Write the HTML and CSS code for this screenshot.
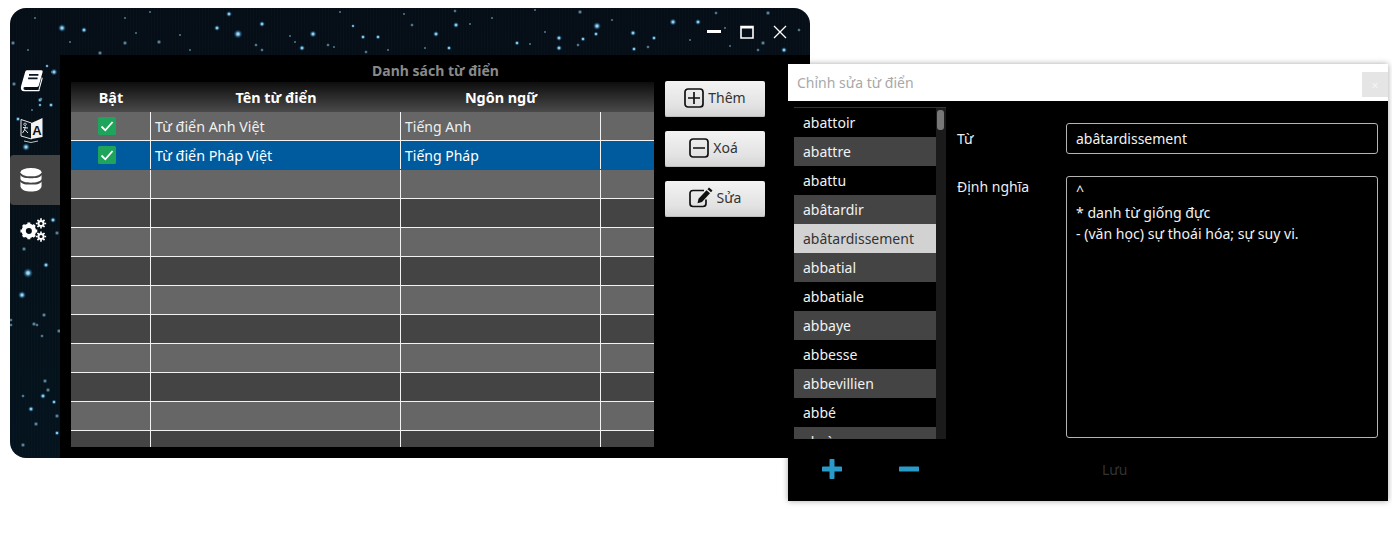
FILE: index.html
```html
<!DOCTYPE html>
<html lang="vi">
<head>
<meta charset="utf-8">
<title>Danh sách từ điển</title>
<link rel="stylesheet" href="styles.css">
</head>
<body>
<section class="win-main">
  <svg class="stars" width="800" height="450" viewBox="10 8 800 450" aria-hidden="true">
    <defs>
      <radialGradient id="st"><stop offset="0" stop-color="#e6f7ff"/><stop offset=".3" stop-color="#9ad4f2"/><stop offset=".6" stop-color="#2f7fae" stop-opacity=".7"/><stop offset="1" stop-color="#1a5a82" stop-opacity="0"/></radialGradient>
      <radialGradient id="dm"><stop offset="0" stop-color="#a8c8d8"/><stop offset=".5" stop-color="#5d8aa3" stop-opacity=".7"/><stop offset="1" stop-color="#2a5a75" stop-opacity="0"/></radialGradient>
    </defs>
    <g fill="url(#st)">
      <circle cx="62" cy="28" r="4"/><circle cx="84" cy="30" r="3"/><circle cx="217" cy="28" r="3"/><circle cx="229" cy="14" r="3"/><circle cx="238" cy="34" r="4.500"/><circle cx="262" cy="24" r="3"/><circle cx="313" cy="34" r="3.500"/><circle cx="302" cy="48" r="3"/><circle cx="363" cy="37" r="2.500"/><circle cx="378" cy="37" r="2.500"/><circle cx="353" cy="26" r="2"/><circle cx="54" cy="72" r="3.500"/><circle cx="26" cy="147" r="4"/><circle cx="456" cy="25" r="3"/><circle cx="436" cy="34" r="3"/><circle cx="449" cy="48" r="2.500"/><circle cx="517" cy="43" r="2.500"/><circle cx="559" cy="38" r="3"/><circle cx="559" cy="48" r="3"/><circle cx="583" cy="39" r="2.500"/><circle cx="597" cy="26" r="4"/><circle cx="596" cy="34" r="2.500"/><circle cx="633" cy="33" r="3"/><circle cx="634" cy="49" r="2.500"/><circle cx="654" cy="38" r="2.500"/><circle cx="673" cy="22" r="3.500"/><circle cx="698" cy="22" r="3"/><circle cx="784" cy="50" r="3"/><circle cx="28" cy="273" r="5"/><circle cx="22" cy="295" r="4"/><circle cx="53" cy="220" r="3"/><circle cx="46" cy="265" r="3"/><circle cx="31" cy="409" r="3"/><circle cx="43" cy="396" r="3"/><circle cx="47" cy="66" r="2"/><circle cx="40" cy="100" r="2.500"/><circle cx="51" cy="105" r="2.500"/><circle cx="40" cy="105" r="2"/><circle cx="18" cy="119" r="2.500"/><circle cx="54" cy="402" r="2.500"/><circle cx="57" cy="433" r="2.500"/></g>
    <g fill="url(#dm)">
      <circle cx="13" cy="43" r="2.500"/><circle cx="125" cy="43" r="2.500"/><circle cx="159" cy="42" r="2.500"/><circle cx="100" cy="53" r="2.500"/><circle cx="14" cy="84" r="2.500"/><circle cx="41" cy="99" r="2"/><circle cx="52" cy="72" r="1.500"/><circle cx="32" cy="110" r="1.500"/><circle cx="455" cy="11" r="2"/><circle cx="580" cy="12" r="2.500"/><circle cx="716" cy="13" r="2"/><circle cx="768" cy="13" r="2.500"/><circle cx="763" cy="43" r="2.500"/><circle cx="799" cy="30" r="2"/><circle cx="57" cy="233" r="2.500"/><circle cx="24" cy="249" r="2.500"/><circle cx="44" cy="315" r="2.500"/><circle cx="34" cy="324" r="2.500"/><circle cx="37" cy="325" r="2"/><circle cx="11" cy="320" r="2"/><circle cx="11" cy="325" r="2"/><circle cx="59" cy="331" r="2.500"/><circle cx="42" cy="336" r="2"/><circle cx="45" cy="381" r="2.500"/><circle cx="48" cy="390" r="2.500"/><circle cx="23" cy="396" r="2"/><circle cx="57" cy="416" r="2.500"/><circle cx="36" cy="424" r="2.500"/><circle cx="23" cy="445" r="2.500"/>
      <circle cx="125" cy="18" r="1.500"/><circle cx="180" cy="35" r="1.500"/><circle cx="136" cy="33" r="1.500"/><circle cx="492" cy="18" r="1.500"/><circle cx="535" cy="10" r="1.500"/><circle cx="404" cy="14" r="1.500"/><circle cx="412" cy="25" r="2"/><circle cx="290" cy="36" r="1.500"/><circle cx="295" cy="42" r="1.500"/><circle cx="256" cy="45" r="2"/><circle cx="262" cy="50" r="2"/><circle cx="328" cy="45" r="2"/><circle cx="334" cy="47" r="1.500"/><circle cx="366" cy="52" r="2"/><circle cx="388" cy="50" r="1.500"/><circle cx="340" cy="12" r="1.500"/><circle cx="425" cy="48" r="1.500"/><circle cx="470" cy="24" r="1.500"/><circle cx="530" cy="44" r="1.500"/><circle cx="545" cy="32" r="1.500"/><circle cx="578" cy="45" r="2"/><circle cx="612" cy="20" r="1.500"/><circle cx="648" cy="47" r="2"/><circle cx="730" cy="46" r="1.500"/><circle cx="758" cy="50" r="2"/><circle cx="690" cy="40" r="1.500"/><circle cx="725" cy="28" r="1.500"/><circle cx="150" cy="12" r="1.500"/><circle cx="190" cy="50" r="1.500"/><circle cx="70" cy="42" r="1.500"/><circle cx="35" cy="18" r="1.500"/><circle cx="28" cy="50" r="1.500"/></g>
  </svg>

  <div class="titlebar">
    <svg class="wc" width="14" height="14" viewBox="0 0 14 14"><rect x="0" y="5" width="14" height="3" fill="#fff"/></svg>
    <svg class="wc" width="14" height="14" viewBox="0 0 14 14"><path d="M1 1.500h12v11.500H1z" fill="none" stroke="#fff" stroke-width="1.600"/><rect x="1" y="1" width="12" height="2.500" fill="#fff"/></svg>
    <svg class="wc" width="14" height="14" viewBox="0 0 14 14"><path d="M1 1l12 12M13 1L1 13" fill="none" stroke="#fff" stroke-width="1.300"/></svg>
  </div>

  <div class="main-body">
    <nav class="side">
      <div class="nav-item">
        <svg width="24" height="23" viewBox="0 0 28 26"><path d="M8 1h17q2 0 1.400 2l-4.500 16q-.6 1.600-2.400 1.600H6q-2 0-2 1.700T6 24h15.500l4-15 1 1.500-3.800 13.700Q24 25.500 22 25.500H4.500Q1 25.500 1 21.500q0-1 .4-2.500L6 3Q6.500 1 8 1z" fill="#fff"/><path d="M10.500 6.500h11M9.500 10.500h11" stroke="#0a1620" stroke-width="2"/></svg>
      </div>
      <div class="nav-item">
        <svg width="24" height="28" viewBox="0 0 24 28"><path d="M1 3.500l10.500 3.500v16L1 20z" fill="#0a1620" stroke="#e8e8e8" stroke-width="1"/><path d="M11.500 7L22.500 2v19l-11 2z" fill="#f2f2f2"/><text x="17" y="18.500" class="ic-a">A</text><path d="M5 9.500a1.200 1.200 0 1 1 .1 0M5.500 10.500L4.500 14 2.500 17M4.800 13.500L8 17M3 11.500l5 .5" fill="none" stroke="#e8e8e8" stroke-width="1"/><path d="M4 25q7 3 14 0" fill="none" stroke="#b8c4c8" stroke-width="1"/></svg>
      </div>
      <div class="nav-item active">
        <svg width="22" height="24" viewBox="0 0 24 26"><ellipse cx="12" cy="4.500" rx="11.500" ry="4.500" fill="#fff"/><path d="M.5 7.500C2 10.500 7 11 12 11s10-.5 11.500-3.500V12c-1 3-6 4-11.500 4S1.500 15 .5 12zM.5 14.500c1.500 3 6.500 3.500 11.500 3.500s10-.5 11.500-3.500V20c-1 4-6 5.500-11.500 5.500S1.500 24 .5 20z" fill="#fff"/></svg>
      </div>
      <div class="nav-item">
        <svg width="28" height="26" viewBox="0 0 30 26"><g fill="none" stroke="#fff"><circle cx="9.500" cy="14" r="5.500" stroke-width="4.500"/><path d="M9.500 5v3M9.500 20v3M.5 14h3M15.500 14h3M3.200 7.700l2.100 2.100M13.700 18.200l2.100 2.100M3.200 20.300l2.100-2.100M13.700 9.800l2.100-2.100" stroke-width="3.200"/><circle cx="22.500" cy="6" r="2.700" stroke-width="2"/><path d="M22.500 .5v2M22.500 9.500v2M17 6h2M26 6h2M18.700 2.200l1.300 1.300M25 8.500l1.300 1.300M18.700 9.800L20 8.500M25 3.500l1.300-1.300" stroke-width="1.800"/><circle cx="22.500" cy="20" r="2.700" stroke-width="2"/><path d="M22.500 14.500v2M22.500 23.500v2M17 20h2M26 20h2M18.700 16.200l1.300 1.300M25 22.500l1.300 1.300M18.700 23.800l1.300-1.300M25 17.500l1.300-1.300" stroke-width="1.800"/></g></svg>
      </div>
    </nav>

    <div class="panel">
      <h1 class="panel-title">Danh sách từ điển</h1>
      <div class="panel-row">
        <div class="grid">
          <div class="grid-head">
            <div class="c c1">Bật</div><div class="c c2">Tên từ điển</div><div class="c c3">Ngôn ngữ</div><div class="c c4"></div>
          </div>
          <div class="row odd">
            <div class="c c1"><svg class="check" width="18" height="18" viewBox="0 0 18 18"><rect width="18" height="18" rx="1.500" fill="#1fa45c"/><path d="M3.500 9.500l3.800 3.800 7.300-8.300" fill="none" stroke="#fff" stroke-width="1.800"/></svg></div><div class="c c2">Từ điển Anh Việt</div><div class="c c3">Tiếng Anh</div><div class="c c4"></div>
          </div>
          <div class="row sel">
            <div class="c c1"><svg class="check" width="18" height="18" viewBox="0 0 18 18"><rect width="18" height="18" rx="1.500" fill="#1fa45c"/><path d="M3.500 9.500l3.800 3.800 7.300-8.300" fill="none" stroke="#fff" stroke-width="1.800"/></svg></div><div class="c c2">Từ điển Pháp Việt</div><div class="c c3">Tiếng Pháp</div><div class="c c4"></div>
          </div>
          <div class="row odd"><div class="c c1"></div><div class="c c2"></div><div class="c c3"></div><div class="c c4"></div></div>
          <div class="row even"><div class="c c1"></div><div class="c c2"></div><div class="c c3"></div><div class="c c4"></div></div>
          <div class="row odd"><div class="c c1"></div><div class="c c2"></div><div class="c c3"></div><div class="c c4"></div></div>
          <div class="row even"><div class="c c1"></div><div class="c c2"></div><div class="c c3"></div><div class="c c4"></div></div>
          <div class="row odd"><div class="c c1"></div><div class="c c2"></div><div class="c c3"></div><div class="c c4"></div></div>
          <div class="row even"><div class="c c1"></div><div class="c c2"></div><div class="c c3"></div><div class="c c4"></div></div>
          <div class="row odd"><div class="c c1"></div><div class="c c2"></div><div class="c c3"></div><div class="c c4"></div></div>
          <div class="row even"><div class="c c1"></div><div class="c c2"></div><div class="c c3"></div><div class="c c4"></div></div>
          <div class="row odd"><div class="c c1"></div><div class="c c2"></div><div class="c c3"></div><div class="c c4"></div></div>
          <div class="row even"><div class="c c1"></div><div class="c c2"></div><div class="c c3"></div><div class="c c4"></div></div>
        </div>
        <div class="actions">
          <button class="btn"><svg width="20" height="20" viewBox="0 0 20 20"><rect x="1" y="1" width="18" height="18" rx="3" fill="none" stroke="#111" stroke-width="1.700"/><path d="M10 4v12M4 10h12" stroke="#111" stroke-width="1.700"/></svg><span>Thêm</span></button>
          <button class="btn btn-x"><svg width="20" height="20" viewBox="0 0 20 20"><rect x="1" y="1" width="18" height="18" rx="3" fill="none" stroke="#111" stroke-width="1.700"/><path d="M4 10h12" stroke="#111" stroke-width="1.700"/></svg><span>Xoá</span></button>
          <button class="btn"><svg width="24" height="21" viewBox="0 0 24 21"><path d="M15 3.500H4Q1 3.500 1 6.500v10q0 3 3 3h10q3 0 3-3v-4" fill="none" stroke="#111" stroke-width="1.700"/><path d="M20 .5l3.500 3-1.500 1.800-3.500-3zM17.500 3.300l3.500 3-8 8.700-4.500 1.200 1-4.500z" fill="#111"/></svg><span>Sửa</span></button>
        </div>
      </div>
    </div>
  </div>
</section>

<section class="win-edit">
  <header class="edit-title">
    <span>Chỉnh sửa từ điển</span>
    <div class="edit-close">×</div>
  </header>
  <div class="edit-body">
    <div class="list-wrap">
      <ul class="list">
        <li>abattoir</li><li>abattre</li><li>abattu</li><li>abâtardir</li><li class="cur">abâtardissement</li><li>abbatial</li><li>abbatiale</li><li>abbaye</li><li>abbesse</li><li>abbevillien</li><li>abbé</li><li>abcès</li>
      </ul>
      <div class="scroll"><div class="thumb"></div></div>
    </div>
    <div class="form">
      <div class="f-row">
        <label class="f-label">Từ</label>
        <div class="f-input">abâtardissement</div>
      </div>
      <div class="f-row f-grow">
        <label class="f-label f-label2">Định nghĩa</label>
        <div class="f-area">^<br>* danh từ giống đực<br>- (văn học) sự thoái hóa; sự suy vi.</div>
      </div>
    </div>
  </div>
  <footer class="edit-foot">
    <svg class="tool" width="20" height="20" viewBox="0 0 20 20"><path d="M10 1.500v17M1.500 10h17" stroke="#2a9bc8" stroke-width="5" stroke-linecap="round"/></svg>
    <svg class="tool tool2" width="20" height="20" viewBox="0 0 20 20"><path d="M1.500 10h17" stroke="#2a9bc8" stroke-width="5" stroke-linecap="round"/></svg>
    <span class="save">Lưu</span>
  </footer>
</section>
</body>
</html>
```

FILE: styles.css
```css
* { box-sizing: border-box; }
html, body { margin: 0; padding: 0; }
body {
  width: 1392px;
  height: 535px;
  position: relative;
  overflow: hidden;
  background: #fff;
  font-family: "Noto Sans", "Open Sans", sans-serif;
  font-size: 14px;
}

.win-main {
  position: absolute;
  left: 10px;
  top: 8px;
  width: 800px;
  height: 450px;
  border-radius: 16px;
  overflow: hidden;
  background:
    repeating-linear-gradient(90deg, rgba(255,255,255,.012) 0 1px, transparent 1px 3px),
    linear-gradient(180deg, #060f18 0%, #06121b 60%, #04141e 100%);
  display: flex;
  flex-direction: column;
}
.stars { position: absolute; left: 0; top: 0; opacity: .9; }

.titlebar {
  position: relative;
  height: 47px;
  flex: none;
  display: flex;
  justify-content: flex-end;
  gap: 19px;
  padding: 17px 23px 0 0;
}
.wc { display: block; }

.main-body { position: relative; flex: 1; display: flex; min-height: 0; }

.side {
  width: 50px;
  flex: none;
  display: flex;
  flex-direction: column;
}
.nav-item {
  height: 50px;
  display: flex;
  align-items: center;
  padding-left: 10px;
}
.nav-item.active { background: #444; border-radius: 4px 0 0 4px; }
.ic-a { font: 700 13px "Liberation Sans", sans-serif; fill: #111; text-anchor: middle; }

.panel {
  flex: 1;
  background: #000;
  padding-left: 11px;
  display: flex;
  flex-direction: column;
  min-width: 0;
}
.panel-title {
  margin: 0;
  height: 27px;
  width: 729px;
  font-size: 14px;
  font-weight: 700;
  line-height: 32px;
  color: #8a8a8a;
  text-align: center;
}
.panel-row { display: flex; flex: 1; min-height: 0; }

.grid { width: 583px; height: 365px; overflow: hidden; flex: none; }
.grid-head {
  height: 30px;
  display: flex;
  background: linear-gradient(180deg, #0d0d0d 0%, #4a4a4a 100%);
  color: #fff;
  font-weight: 700;
  font-size: 14.4px;
}
.grid-head .c { justify-content: center; border: 0; }
.grid-head .c2, .grid-head .c3 { padding: 0; }
.row { height: 29px; display: flex; border-bottom: 1px solid #f2f2f2; color: #f0f0f0; }
.odd { background: #666; }
.even { background: #444; }
.sel { background: #005a9e; border-bottom-color: #005a9e; color: #fff; }
.c { display: flex; align-items: center; border-right: 1px solid #f2f2f2; }
.c1 { width: 80px; justify-content: center; padding-right: 7px; }
.grid-head .c1 { padding-right: 0; }
.c2 { width: 250px; padding-left: 4px; font-size: 14.3px; }
.c3 { width: 200px; padding-left: 4px; }
.c4 { flex: 1; border-right: 0; }
.check { display: block; margin-top: -1px; }

.actions {
  margin-left: 11px;
  width: 100px;
  flex: none;
  display: flex;
  flex-direction: column;
  gap: 14px;
  margin-top: -1px;
}
.btn {
  width: 100px;
  height: 36px;
  padding: 0 0 3px;
  border: 0;
  border-radius: 2px;
  background: linear-gradient(180deg, #f3f3f3 0%, #e2e2e2 70%, #d2d2d2 100%);
  box-shadow: inset 0 -1px 0 #bbb;
  color: #333;
  font: 14px "Noto Sans", "Open Sans", sans-serif;
  display: flex;
  align-items: center;
  justify-content: center;
  gap: 4px;
}
.btn-x { padding-right: 3px; }

.win-edit {
  position: absolute;
  left: 788px;
  top: 64px;
  width: 600px;
  height: 437px;
  background: #000;
  box-shadow: 0 0 6px rgba(0,0,0,.35);
  display: flex;
  flex-direction: column;
}
.edit-title {
  height: 37px;
  flex: none;
  background: #fff;
  color: #a8a8a8;
  font-size: 14px;
  padding-left: 9px;
  display: flex;
  align-items: center;
  justify-content: space-between;
}
.edit-close {
  width: 26px;
  height: 25px;
  margin-top: 8px;
  background: #e5e5e5;
  color: #f4f4f4;
  font-size: 13px;
  display: flex;
  align-items: center;
  justify-content: center;
  align-self: flex-start;
}
.edit-body { flex: 1; display: flex; min-height: 0; padding: 6px 10px 0 6px; height: 338px; }
.list-wrap { width: 152px; height: 332px; flex: none; display: flex; border-top: 1px solid #333; overflow: hidden; }
.list { margin: 0; padding: 0; list-style: none; width: 142px; flex: none; }
.list li { height: 29px; line-height: 29px; padding-left: 9px; color: #f2f2f2; }
.list li:nth-child(even) { background: #444; }
.list li.cur { background: #d2d2d2; color: #333; }
.scroll { width: 10px; background: #1b1b1b; padding: 2px 2px 0 1px; }
.thumb { height: 20px; border-radius: 3px; background: #777; }

.form { flex: 1; padding-left: 11px; padding-top: 16px; display: flex; flex-direction: column; gap: 22px; }
.f-row { display: flex; }
.f-grow { height: 262px; }
.f-label { width: 109px; flex: none; color: #eee; line-height: 31px; }
.f-label2 { line-height: 21px; }
.f-input {
  flex: 1;
  height: 31px;
  border: 1px solid #b4b4b4;
  border-radius: 3px;
  color: #f2f2f2;
  padding-left: 9px;
  line-height: 29px;
}
.f-area {
  flex: 1;
  border: 1px solid #b4b4b4;
  border-radius: 3px;
  color: #f2f2f2;
  padding: 3px 9px;
  line-height: 21.500px;
  font-size: 14.1px;
}

.edit-foot {
  height: 62px;
  flex: none;
  display: flex;
  align-items: center;
  padding-left: 34px;
  padding-bottom: 2px;
}
.tool { display: block; }
.tool2 { margin-left: 57px; }
.save { margin-left: 183px; color: #333; }
```
